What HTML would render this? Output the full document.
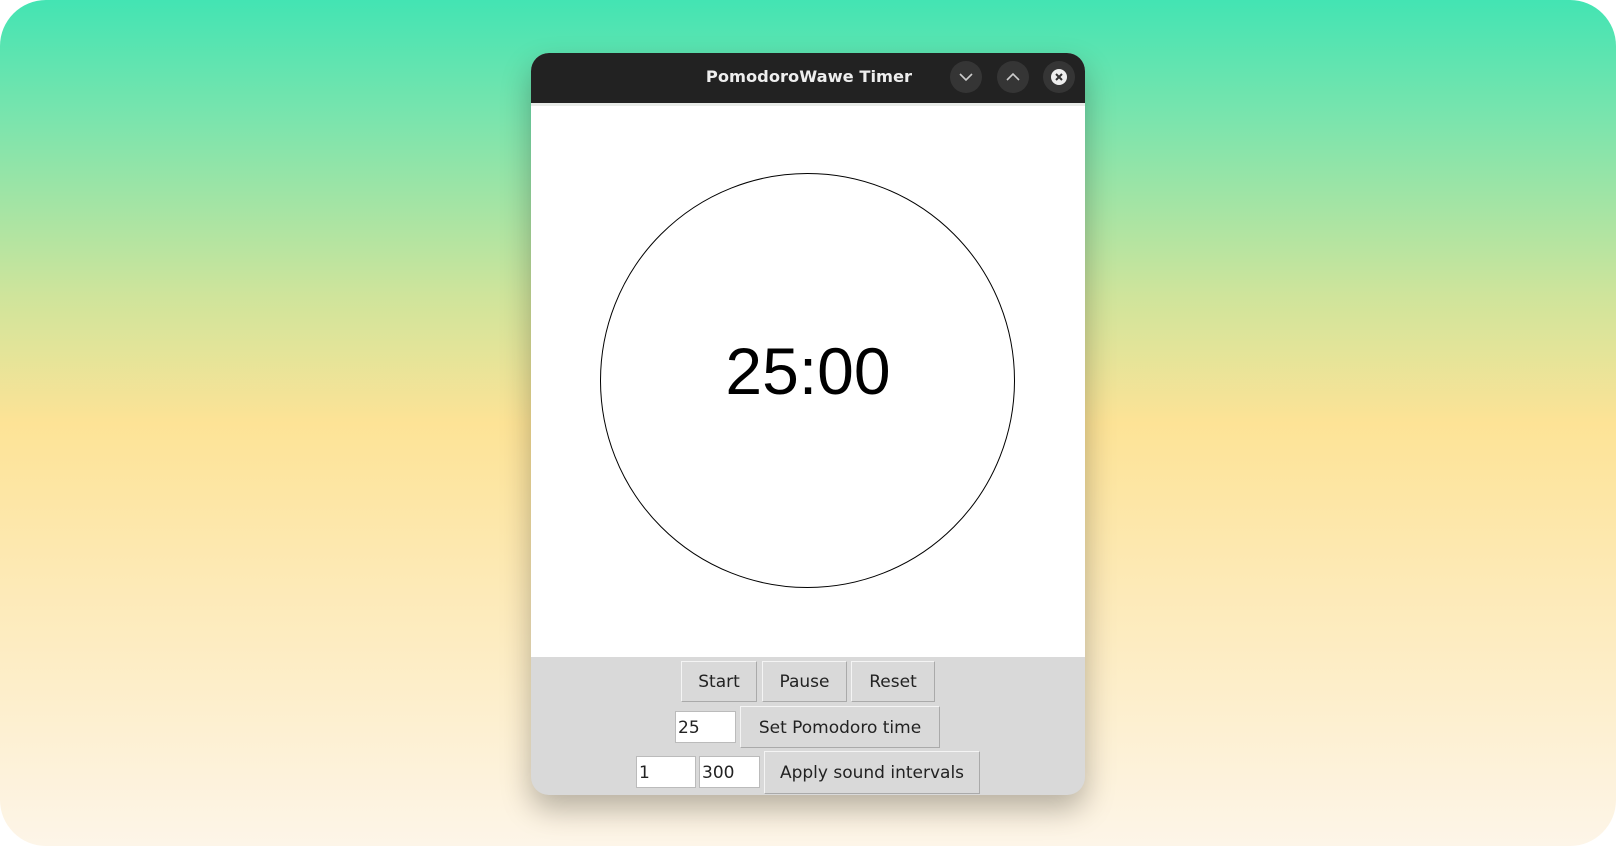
<!DOCTYPE html>
<html><head><style>
*{margin:0;padding:0;box-sizing:border-box}
body{width:1616px;height:846px;background:#fff;position:relative;overflow:hidden;font-family:"DejaVu Sans","Liberation Sans",sans-serif}
.card{position:absolute;left:0;top:0;width:1616px;height:846px;border-radius:46px;background:linear-gradient(180deg,#43e4b3 0%,#7ae4ad 14%,#cfe49b 35%,#fde396 50%,#fdeab8 70%,#fdf5e8 100%)}
.win{position:absolute;left:531px;top:53px;width:554px;height:742px;border-radius:18px;overflow:hidden;background:#d9d9d9;box-shadow:0 14px 30px rgba(0,0,0,.28)}
.tb{position:absolute;left:0;top:0;width:100%;height:50px;background:#222}
.tb .t{position:absolute;left:0;width:556px;text-align:center;top:14px;color:#eee;font-weight:bold;font-size:16.3px}
.cb{position:absolute;top:8px;width:32px;height:32px;border-radius:50%;background:#353535}
.canvas{position:absolute;left:0;top:50px;width:100%;height:554px;background:#fff;border-top:3px solid #e8ebe8}
.circ{position:absolute;left:69px;top:67px;width:415px;height:415px;border:1.3px solid #000;border-radius:50%}
.time{position:absolute;left:0;width:100%;top:227px;text-align:center;font-family:"Liberation Sans",sans-serif;font-size:66px;color:#000}
.b{position:absolute;background:#d9d9d9;border:1px solid #aaa;border-top-color:#f4f4f4;border-left-color:#f4f4f4;font-size:17px;color:#222;text-align:center}
.e{position:absolute;background:#fff;border:1px solid #bbb;font-size:17px;color:#222;padding-left:2px}
</style></head><body>
<div class="card"></div>
<div class="win">
 <div class="tb"><div class="t">PomodoroWawe Timer</div>
  <div class="cb" style="left:419px"><svg width="32" height="32"><path d="M10 13l6 6 6-6" stroke="#ccc" stroke-width="1.6" fill="none"/></svg></div>
  <div class="cb" style="left:466px"><svg width="32" height="32"><path d="M10 19l6-6 6 6" stroke="#ccc" stroke-width="1.6" fill="none"/></svg></div>
  <div class="cb" style="left:512px"><svg width="32" height="32"><circle cx="16" cy="16" r="8" fill="#eee"/><path d="M13 13l6 6M19 13l-6 6" stroke="#333" stroke-width="2"/></svg></div>
 </div>
 <div class="canvas"><div class="circ"></div><div class="time">25:00</div></div>
 <div class="b" style="left:150px;top:608px;width:76px;height:41px;line-height:41px">Start</div>
 <div class="b" style="left:231px;top:608px;width:85px;height:41px;line-height:41px">Pause</div>
 <div class="b" style="left:320px;top:608px;width:84px;height:41px;line-height:41px">Reset</div>
 <div class="e" style="left:144px;top:658px;width:61px;height:32px;line-height:32px">25</div>
 <div class="b" style="left:209px;top:653px;width:200px;height:42px;line-height:42px">Set Pomodoro time</div>
 <div class="e" style="left:105px;top:703px;width:60px;height:32px;line-height:32px">1</div>
 <div class="e" style="left:168px;top:703px;width:61px;height:32px;line-height:32px">300</div>
 <div class="b" style="left:233px;top:698px;width:216px;height:43px;line-height:43px">Apply sound intervals</div>
</div>
</body></html>
